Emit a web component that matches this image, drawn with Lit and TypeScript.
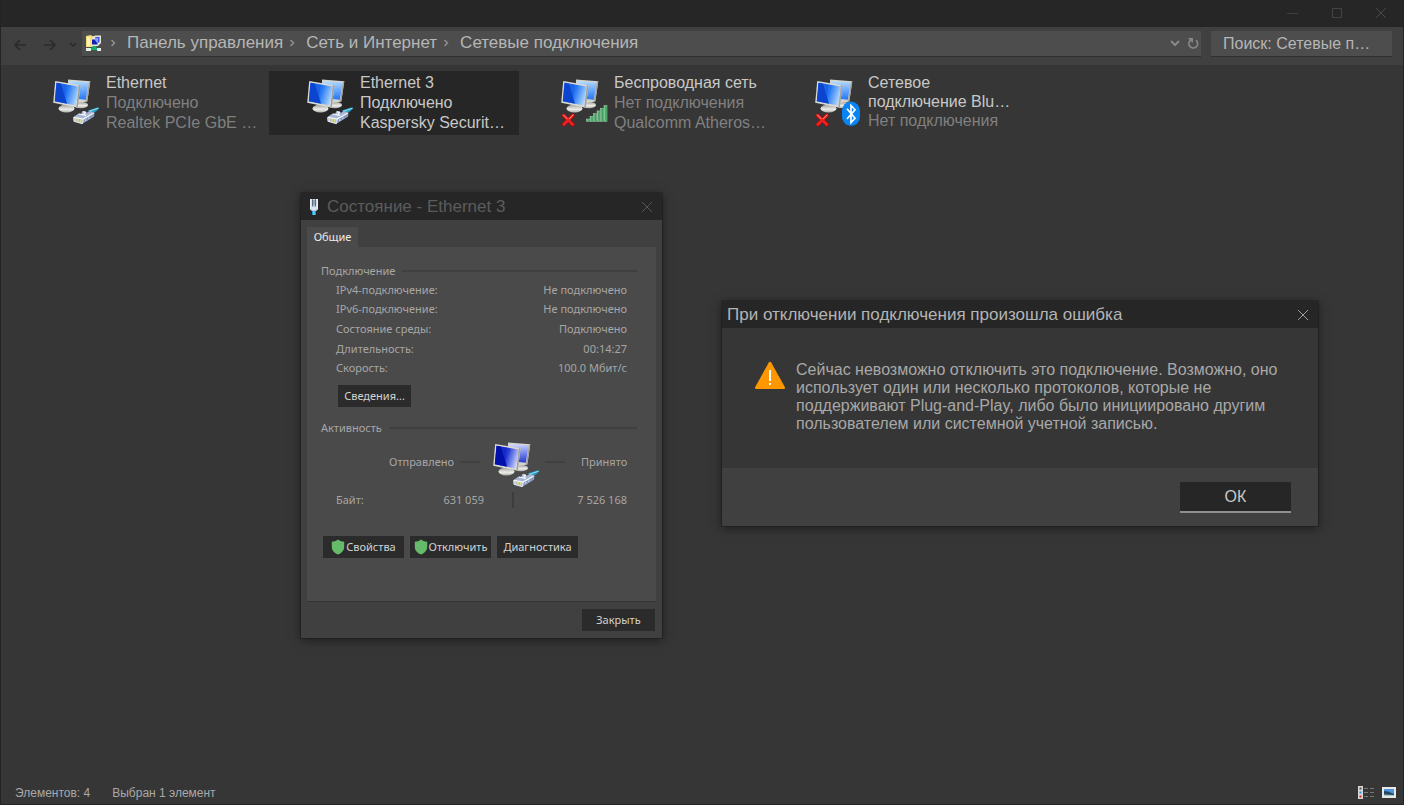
import { LitElement, html, css, svg, nothing } from "lit";
import { customElement, property } from "lit/decorators.js";
import { classMap } from "lit/directives/class-map.js";

type Badge = "cable" | "wifi" | "bluetooth";

interface Connection {
  name: string[];
  details: string[];
  badge: Badge;
  offline: boolean;
  selected: boolean;
}

const CONNECTIONS: Connection[] = [
  { name: ["Ethernet"], details: ["Подключено", "Realtek PCIe GbE …"], badge: "cable", offline: false, selected: false },
  { name: ["Ethernet 3"], details: ["Подключено", "Kaspersky Securit…"], badge: "cable", offline: false, selected: true },
  { name: ["Беспроводная сеть"], details: ["Нет подключения", "Qualcomm Atheros…"], badge: "wifi", offline: true, selected: false },
  { name: ["Сетевое", "подключение Blu…"], details: ["Нет подключения"], badge: "bluetooth", offline: true, selected: false },
];

const CRUMBS = ["Панель управления", "Сеть и Интернет", "Сетевые подключения"];

const STATUS_ROWS: [string, string][] = [
  ["IPv4-подключение:", "Не подключено"],
  ["IPv6-подключение:", "Не подключено"],
  ["Состояние среды:", "Подключено"],
  ["Длительность:", "00:14:27"],
  ["Скорость:", "100.0 Мбит/с"],
];

const cross = () => svg`
  <svg width="12" height="12" viewBox="0 0 12 12" aria-hidden="true">
    <path d="M1 1L11 11M11 1L1 11" fill="none" stroke="currentColor" stroke-width="1"/>
  </svg>`;

const shield = () => svg`
  <svg class="shield" width="14" height="16" viewBox="0 0 14 16" aria-hidden="true">
    <path d="M7 0.5C9 2 11 2.6 13.2 2.8V8C13.2 11.5 10.5 14.2 7 15.5C3.5 14.2 0.8 11.5 0.8 8V2.8C3 2.6 5 2 7 0.5Z" fill="#66bb6a"/>
  </svg>`;

@customElement("network-icon")
export class NetworkIcon extends LitElement {
  @property() badge: Badge = "cable";
  @property({ type: Boolean }) offline = false;
  @property({ type: Boolean }) deep = false;

  static styles = css`
    :host { display: block; width: 51px; height: 50px; }
    svg { display: block; }
  `;

  private renderBadge() {
    if (this.badge === "cable") {
      return svg`
        <path d="M38 33.500L47 30.500L49.500 31L46 34.500L40 37Z" fill="#2a9fc4"/>
        <path d="M39 34.300L48.500 31.200" stroke="#8be0f4" stroke-width="1"/>
        <path d="M23.500 40L28.500 36.500L31 37L32.500 34L36 34.500L36.500 36L40 34L44.500 35.500L44 39.500L32 47L23.800 44.500Z" fill="#a9b6d2"/>
        <path d="M24 40.300L33 42L43.500 36.200M29 37L36 38.300M33 34.800L35.500 35.400L33.500 38" stroke="#f4f8ff" stroke-width="1.200" fill="none"/>
        <path d="M33.500 43L33 46L43.700 39.500L44 36.800Z" fill="#8295bf"/>
        <path d="M36 42L35.800 44M39 40.300L38.800 42" stroke="#dfe8fa" stroke-width="0.800"/>
        <path d="M24.800 41.300H26.300V44.300L24.800 43.800ZM27.300 41.800H28.800V45L27.300 44.600ZM30 42.200H31.400V45.700L30 45.300Z" fill="#dfe08a"/>
        <path d="M23.700 40.300L24 44.300L32.300 46.600L33.300 42" stroke="#eef2fb" stroke-width="0.900" fill="none"/>`;
    }
    if (this.badge === "wifi") {
      return svg`
        ${[0, 1, 2, 3, 4, 5].map(
          (i) => svg`<rect x=${28.5 + i * 3.5} y=${42 - i * 2.7} width="3" height=${2.5 + i * 2.7} fill="url(#bars)" stroke="#a4d2ae" stroke-width="0.500"/>`,
        )}`;
    }
    return svg`
      <rect x="30" y="24.500" width="18" height="24.500" rx="9" ry="9.500" fill="#0a84f4"/>
      <path d="M35 31.800L43 41.300L39 45.500V28.500L43 32.700L35 42" fill="none" stroke="#fff" stroke-width="1.700"/>`;
  }

  render() {
    const dark = this.deep ? "#0010a8" : "#0b45cf";
    const mid = this.deep ? "#2238d4" : "#2476f4";
    const light = this.deep ? "#d0d8ff" : "#b4dcff";
    return html`
      <svg width="51" height="50" viewBox="0 0 51 50" aria-hidden="true">
        <defs>
          <linearGradient id="front" x1="0" y1="0.300" x2="1" y2="0.600">
            <stop offset="0.300" stop-color=${mid} /><stop offset="0.500" stop-color=${mid} /><stop offset="1" stop-color=${light} />
          </linearGradient>
          <linearGradient id="back" x1="0.500" y1="0" x2="0.600" y2="1">
            <stop offset="0" stop-color=${light} /><stop offset="1" stop-color=${mid} />
          </linearGradient>
          <linearGradient id="metal" x1="0" y1="0" x2="0" y2="1">
            <stop offset="0" stop-color="#9c9c98" /><stop offset="0.600" stop-color="#ecece9" /><stop offset="1" stop-color="#b0b0ac" />
          </linearGradient>
          <linearGradient id="bars" x1="0" y1="0" x2="1" y2="0">
            <stop offset="0" stop-color="#7fc98f" /><stop offset="1" stop-color="#1f8a4b" />
          </linearGradient>
        </defs>
        <ellipse cx="31" cy="28" rx="7" ry="3.200" fill="url(#metal)" />
        <path d="M18 2.500L40.300 4.300L37.300 24.500L28 26L18 22Z" fill="#d4d3cd" />
        <path d="M40.300 4.300L37.300 24.500L36 24.300L38.800 5.500Z" fill="#a2a29c" />
        <path d="M19.500 4L38.500 5.600L35.800 22.800L19.500 21Z" fill="url(#back)" />
        <path d="M13 26H21L21 32H13Z" fill="#8e8e8a" />
        <ellipse cx="16.500" cy="31.500" rx="8" ry="4" fill="url(#metal)" />
        <path d="M5.200 4L30.500 8.200L27.800 30.800L3.200 25.800Z" fill="#d9d8d2" />
        <path d="M30.500 8.200L27.800 30.800L26.300 30.500L28.800 8.300Z" fill="#a2a29c" />
        <path d="M6.500 5.800L28.500 9.500L26 28.500L4.800 24.200Z" fill="url(#front)" />
        <path d="M6.500 5.800L11 6.600L17 26.700L4.800 24.200Z" fill=${dark} />
        <path d="M11 6.600L17 7.600L15 20Z" fill=${dark} opacity="0.350" />
        ${this.renderBadge()}
        ${this.offline
          ? svg`<path d="M4.500 37.300L16 48.700M16 37.300L4.500 48.700" stroke="#8d0f10" stroke-width="4"/>
                <path d="M5 37.700L15.500 48.200M15.500 37.700L5 48.200" stroke="#ee2020" stroke-width="2.800"/>
                <path d="M5 37.500L9.500 42M15.500 37.500L11 42" stroke="#ff8a80" stroke-width="1"/>`
          : nothing}
      </svg>
    `;
  }
}

@customElement("connection-tile")
export class ConnectionTile extends LitElement {
  @property({ attribute: false }) item!: Connection;

  static styles = css`
    :host { display: block; }
    .tile {
      display: flex;
      align-items: flex-start;
      gap: 5px;
      width: 100%;
      height: 64px;
      padding: 2px 8px 0 35px;
      border: 0;
      background: transparent;
      color: #808080;
      font: 16px/20px "Liberation Sans", Arial, sans-serif;
      text-align: left;
    }
    .selected { background: #262626; color: #c8c8c8; }
    .icon { flex: none; padding-top: 4px; }
    .text { min-width: 0; white-space: nowrap; }
    .line { display: block; }
    .name { color: #c8c8c8; }
    .double .name { line-height: 19px; }
  `;

  render() {
    const { name, details, badge, offline, selected } = this.item;
    return html`
      <button class=${classMap({ tile: true, selected })} aria-pressed=${selected}>
        <network-icon class="icon" .badge=${badge} .offline=${offline}></network-icon>
        <span class=${classMap({ text: true, double: name.length > 1 })}>
          ${name.map((line) => html`<span class="line name">${line}</span>`)}
          ${details.map((line) => html`<span class="line">${line}</span>`)}
        </span>
      </button>
    `;
  }
}

@customElement("status-dialog")
export class StatusDialog extends LitElement {
  static styles = css`
    :host {
      display: block;
      background: #404040;
      box-shadow: 0 2px 10px rgba(0, 0, 0, 0.5), 0 0 0 1px #2c2c2c;
      color: #a6a6a6;
      font: 11px/14px "Noto Sans", Tahoma, sans-serif;
    }
    button { border: 0; padding: 0; color: #d2d2d2; background: #2b2b2b; font: inherit; }
    .title {
      display: flex;
      align-items: center;
      height: 27px;
      padding: 0 9px 0 8px;
      background: #262626;
      color: #5c5c5c;
      font: 17px/20px "Liberation Sans", Arial, sans-serif;
    }
    .title h2 { flex: 1; margin: 0 0 0 8px; font: inherit; }
    .title .close { display: flex; background: none; color: #565656; }
    .body { padding: 7px 6px; }
    .tab { display: block; width: 51px; height: 20px; background: #4a4a4a; color: #ececec; }
    .panel { padding: 17px 19px 43px 14px; background: #4a4a4a; border-bottom: 1px solid #333; }
    .legend { display: flex; align-items: center; gap: 7px; }
    .legend::after { content: ""; flex: 1; height: 2px; background: #404040; }
    .rows { display: grid; grid-auto-rows: 1fr; align-items: center; height: 98px; margin: 2px 10px 7px 15px; }
    .row { display: flex; justify-content: space-between; }
    dt, dd { margin: 0; }
    .small { width: 73px; height: 22px; }
    .details { margin: 0 0 14px 17px; }
    .flow {
      display: grid;
      grid-template: 48px / 118px 20px 65px 20px 1fr;
      column-gap: 0;
      align-items: center;
      margin: 3px 10px 0 15px;
    }
    .flow { grid-template-columns: 124px 20px 65px 20px 1fr; }
    .sent { padding-right: 6px; text-align: right; }
    .received { padding-left: 16px; }
    .flow network-icon { margin: 6px 0 0 10px; }
    .dash { height: 2px; background: #404040; }
    .end { text-align: right; }
    .bytes { display: grid; grid-template-columns: 60px 88px 30px 1fr; align-items: center; margin: 6px 10px 0 15px; }
    .divider { justify-self: end; width: 2px; height: 16px; background: #3d3d3d; }
    .actions { display: flex; gap: 6px; margin: 28px 0 0 2px; }
    .actions button { display: flex; align-items: center; justify-content: center; gap: 1px; width: 81px; height: 22px; }
    .shield { flex: none; }
    .footer { display: flex; justify-content: flex-end; padding: 7px 1px 0 0; }
  `;

  render() {
    return html`
      <header class="title">
        <svg width="10" height="18" viewBox="0 0 10 18" aria-hidden="true">
          <path d="M1 1H9V11L7.500 13H2.500L1 11Z" fill="#9fb2c6" />
          <path d="M1 1H2.800V11.500H1ZM7.200 1H9V11.500H7.200Z" fill="#e6eef6" />
          <path d="M3 1.500H7V8H3Z" fill="#5b6b7d" />
          <path d="M4 1H6V8.500H4Z" fill="#c3d0dc" /><path d="M5 2V7" stroke="#4a5868" stroke-width="0.700" />
          <path d="M2.800 9H7.200V12.500H2.800Z" fill="#dde7f0" />
          <path d="M3 13H7V17H3Z" fill="#1c9fd0" /><path d="M4.300 13H5.500V17H4.300Z" fill="#8fe0f8" />
        </svg>
        <h2>Состояние - Ethernet 3</h2>
        <button class="close" aria-label="Закрыть">${cross()}</button>
      </header>
      <div class="body">
        <div role="tablist"><button class="tab" role="tab" aria-selected="true">Общие</button></div>
        <section class="panel" role="tabpanel">
          <div class="legend">Подключение</div>
          <dl class="rows">
            ${STATUS_ROWS.map(([k, v]) => html`<div class="row"><dt>${k}</dt><dd>${v}</dd></div>`)}
          </dl>
          <button class="small details">Сведения...</button>
          <div class="legend">Активность</div>
          <div class="flow">
            <span class="sent">Отправлено</span><span class="dash"></span>
            <network-icon deep></network-icon>
            <span class="dash"></span><span class="received">Принято</span>
          </div>
          <div class="bytes">
            <span>Байт:</span><span class="end">631 059</span><span class="divider"></span><span class="end">7 526 168</span>
          </div>
          <div class="actions">
            <button>${shield()}Свойства</button>
            <button>${shield()}Отключить</button>
            <button>Диагностика</button>
          </div>
        </section>
        <footer class="footer"><button class="small">Закрыть</button></footer>
      </div>
    `;
  }
}

@customElement("error-dialog")
export class ErrorDialog extends LitElement {
  static styles = css`
    :host {
      display: block;
      background: #363636;
      box-shadow: 0 2px 10px rgba(0, 0, 0, 0.5), 0 0 0 1px #2c2c2c;
      color: #a8a8a8;
      font: 16px/18px "Liberation Sans", Arial, sans-serif;
    }
    .title { display: flex; align-items: center; height: 27px; padding: 0 9px 0 5px; background: #262626; color: #b4b4b4; }
    .title h2 { flex: 1; margin: 0; font: inherit; font-size: 17px; line-height: 20px; }
    .close { display: flex; padding: 0; border: 0; background: none; color: #999; }
    .message { display: flex; align-items: flex-start; gap: 10px; padding: 33px 40px 35px 32px; }
    .message p { margin: 0; }
    .footer { display: flex; justify-content: flex-end; padding: 14px 27px 13px; background: #404040; }
    .ok { width: 111px; height: 31px; padding: 0; border: 0; border-bottom: 2px solid #8f8f8f; background: #262626; color: #c8c8c8; font: inherit; }
  `;

  render() {
    return html`
      <header class="title">
        <h2>При отключении подключения произошла ошибка</h2>
        <button class="close" aria-label="Закрыть">${cross()}</button>
      </header>
      <div class="message">
        <svg width="32" height="30" viewBox="0 0 32 30" aria-hidden="true">
          <path d="M14.800 1.500Q16 0 17.200 1.500L30.800 26Q31.500 28 29.800 28H2.200Q0.500 28 1.200 26Z" fill="#ff9800" />
          <path d="M15 9H17V20H15ZM15 22H17V24H15Z" fill="#fff" />
        </svg>
        <p>
          Сейчас невозможно отключить это подключение. Возможно, оно<br />
          использует один или несколько протоколов, которые не<br />
          поддерживают Plug-and-Play, либо было инициировано другим<br />
          пользователем или системной учетной записью.
        </p>
      </div>
      <footer class="footer"><button class="ok">ОК</button></footer>
    `;
  }
}

@customElement("app-root")
export class AppRoot extends LitElement {
  static styles = css`
    * { box-sizing: border-box; }
    :host { display: block; }
    .window {
      position: relative;
      display: flex;
      flex-direction: column;
      min-height: 100vh;
      border: 1px solid #242424;
      border-top: 0;
      background: #363636;
      color: #b6b6b6;
      font: 16px/20px "Liberation Sans", Arial, sans-serif;
    }
    button { display: flex; padding: 0; border: 0; background: none; color: inherit; font: inherit; }
    .titlebar { display: flex; justify-content: flex-end; align-items: center; gap: 32px; height: 27px; padding: 0 16px 1px 0; background: #262626; color: #4a4a4a; }
    .toolbar { display: flex; align-items: center; height: 38px; padding: 0 11px 4px 12px; background: #404040; }
    .nav { display: flex; align-items: center; width: 69px; padding-top: 2px; color: #2a2a2a; }
    .nav button + button { margin-left: 16px; }
    .nav .recent { margin-left: 12px; }
    .address { flex: 1; display: flex; align-items: center; gap: 6px; height: 26px; padding: 0 2px 2px 3px; background: #4d4d4d; border-bottom: 1px solid #303030; }
    .crumbs { display: flex; align-items: center; gap: 5px; margin: 0; padding: 0; list-style: none; font-size: 17px; }
    .crumbs li { display: flex; align-items: center; gap: 10px; }
    .crumbs a { color: inherit; text-decoration: none; }
    .tools { display: flex; align-items: center; gap: 6px; margin-left: auto; color: #888; }
    .search { width: 181px; height: 26px; margin-left: 10px; padding: 0 12px; border: 0; border-bottom: 1px solid #303030; background: #4d4d4d; color: #b6b6b6; font: inherit; outline: 0; }
    .search::placeholder { color: #b6b6b6; opacity: 1; }
    .items { display: grid; grid-template-columns: repeat(auto-fill, 250px); gap: 4px; flex: 1; align-content: start; margin: 0; padding: 6px 14px; list-style: none; }
    .status { display: flex; align-items: center; gap: 22px; height: 23px; padding: 0 7px 0 14px; font-size: 12px; line-height: 16px; color: #a8a8a8; }
    .views { display: flex; gap: 7px; margin-left: auto; }
    .status-window { position: absolute; left: 300px; top: 193px; width: 361px; }
    .error-window { position: absolute; left: 721px; top: 301px; width: 596px; }
  `;

  private chevron() {
    return svg`<svg width="8" height="10" viewBox="0 0 8 10" aria-hidden="true"><path d="M2.500 2L5.500 5L2.500 8" fill="none" stroke="#909090" stroke-width="1.500"/></svg>`;
  }

  render() {
    return html`
      <main class="window">
        <header class="titlebar">
          <button aria-label="Свернуть"><svg width="12" height="12" viewBox="0 0 12 12"><path d="M0 6.500H11" stroke="#404040" /></svg></button>
          <button aria-label="Развернуть"><svg width="12" height="12" viewBox="0 0 12 12"><path d="M1.500 1.500H10.500V10.500H1.500Z" fill="none" stroke="#444" /></svg></button>
          <button aria-label="Закрыть">${cross()}</button>
        </header>
        <div class="toolbar">
          <nav class="nav" aria-label="История">
            <button aria-label="Назад"><svg width="14" height="12" viewBox="0 0 14 12"><path d="M13 6H2M7 1L2 6L7 11" fill="none" stroke="currentColor" stroke-width="1.600" /></svg></button>
            <button aria-label="Вперед"><svg width="14" height="12" viewBox="0 0 14 12"><path d="M1 6H12M7 1L12 6L7 11" fill="none" stroke="currentColor" stroke-width="1.600" /></svg></button>
            <button class="recent" aria-label="Последние"><svg width="8" height="6" viewBox="0 0 8 6"><path d="M1 1L4 4.200L7 1" fill="none" stroke="currentColor" stroke-width="1.600" /></svg></button>
          </nav>
          <div class="address">
            <svg width="18" height="18" viewBox="0 0 18 18" aria-hidden="true">
              <path d="M1 2L6 1L7 2H11V13H1Z" fill="#f4dc7c" /><path d="M2 3H5V12H2Z" fill="#fff3b8" />
              <path d="M6 5L10 1.500H16V9L13 12H6Z" fill="#e4e2d6" />
              <path d="M10.500 3H14.500V8L13 9V4.500H10Z" fill="#3858e8" /><path d="M7 5.500H12.500V10.500H7Z" fill="#1420b0" /><path d="M9.500 5.500H12.500V9.500Z" fill="#8ea6ff" />
              <path d="M7.500 12H11.500V14H14V16H4V14H7.500Z" fill="#14b070" />
              <path d="M1 14H6V17H1ZM12 14H16V17H12Z" fill="#dff2e8" />
            </svg>
            <ol class="crumbs">
              ${CRUMBS.map((c) => html`<li>${this.chevron()}<a href="#">${c}</a></li>`)}
            </ol>
            <div class="tools">
              <button aria-label="Показать адреса"><svg width="12" height="12" viewBox="0 0 12 12"><path d="M2 4L6 8L10 4" fill="none" stroke="currentColor" stroke-width="2" /></svg></button>
              <button aria-label="Обновить"><svg width="12" height="12" viewBox="0 0 12 12"><path d="M9 3.200A4.400 4.400 0 1 1 4.600 2.600M1.500 1.700H5.200V5.500" fill="none" stroke="currentColor" stroke-width="1.600" /></svg></button>
            </div>
          </div>
          <input class="search" type="text" aria-label="Поиск" placeholder="Поиск: Сетевые п…" />
        </div>
        <ul class="items">
          ${CONNECTIONS.map((item) => html`<li><connection-tile .item=${item}></connection-tile></li>`)}
        </ul>
        <footer class="status">
          <span>Элементов: 4</span>
          <span>Выбран 1 элемент</span>
          <div class="views">
            <button aria-label="Таблица"><svg width="17" height="14" viewBox="0 0 17 14"><path d="M0 0H5V13H0Z" fill="#d8d8d8" /><path d="M1.500 1.500H3.500V3.500H1.500Z" fill="#555" /><path d="M1.500 5.500H3.500V7.500H1.500Z" fill="#2f8fe0" /><path d="M1.500 9.500H3.500V11.500H1.500Z" fill="#d02020" /><path d="M6 2.500H10M12 2.500H16M6 6.500H10M12 6.500H16M6 10.500H10M12 10.500H16" stroke="#777" /></svg></button>
            <button aria-label="Крупные значки"><svg width="14" height="14" viewBox="0 0 14 14"><path d="M0 1H14V12H0Z" fill="#e8e8e8" /><path d="M2 3H12V10H2Z" fill="#4f93dc" /><path d="M2 5L6 5.500L12 8V10H2Z" fill="#20485c" /><path d="M2 8.500L12 9V10H2Z" fill="#a8c8d0" /></svg></button>
          </div>
        </footer>
        <status-dialog class="status-window" role="dialog" aria-label="Состояние - Ethernet 3"></status-dialog>
        <error-dialog class="error-window" role="alertdialog" aria-label="Ошибка"></error-dialog>
      </main>
    `;
  }
}
